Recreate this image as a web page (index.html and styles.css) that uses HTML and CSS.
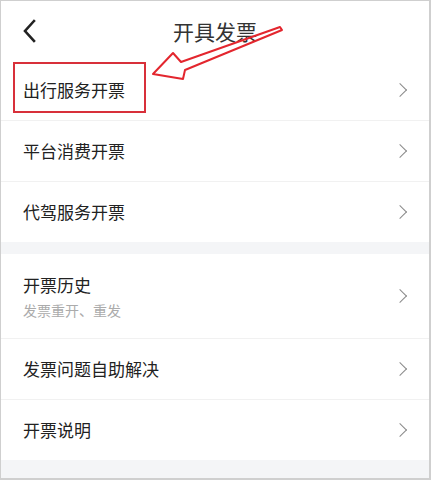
FILE: index.html
```html
<!DOCTYPE html>
<html lang="zh-CN">
<head>
<meta charset="utf-8">
<title>开具发票</title>
<link rel="stylesheet" href="styles.css">
</head>
<body>
<div class="screen">
  <header class="header">
    <span class="back">
      <svg width="14" height="24" viewBox="0 0 14 24"><path d="M12 2 L3 12 L12 22" fill="none" stroke="#222" stroke-width="2.6" stroke-linecap="square" stroke-linejoin="miter"/></svg>
    </span>
    <h1 class="title">开具发票</h1>
    <span></span>
  </header>
  <ul class="group">
    <li class="row"><span class="label">出行服务开票</span><span class="chev"></span></li>
    <li class="row"><span class="label">平台消费开票</span><span class="chev"></span></li>
    <li class="row"><span class="label">代驾服务开票</span><span class="chev"></span></li>
  </ul>
  <div class="gap"></div>
  <ul class="group">
    <li class="row row-tall"><span class="text"><span class="label">开票历史</span><span class="sub">发票重开、重发</span></span><span class="chev"></span></li>
    <li class="row"><span class="label">发票问题自助解决</span><span class="chev"></span></li>
    <li class="row"><span class="label">开票说明</span><span class="chev"></span></li>
  </ul>
  <div class="foot"></div>

  <div class="highlight"></div>
  <svg class="arrow" width="431" height="120" viewBox="0 0 431 120">
    <polygon points="280,27 181,62 173,53 153,74 183,79 185,70 282,30" fill="none" stroke="#e3262e" stroke-width="2" stroke-linejoin="round"/>
  </svg>
</div>
</body>
</html>
```
FILE: styles.css
```css
* { box-sizing: border-box; }
html, body { margin: 0; padding: 0; background: #fff; }
body {
  font-family: "Noto Sans CJK SC", "Noto Sans", sans-serif;
  color: #222;
}
.screen {
  position: relative;
  width: 431px;
  height: 480px;
  border: 1px solid #cfcfcf;
  border-right-width: 2px;
  border-bottom-width: 2px;
  overflow: hidden;
  display: flex;
  flex-direction: column;
  background: #fff;
}
.header {
  height: 59px;
  display: grid;
  grid-template-columns: 1fr auto 1fr;
  align-items: center;
  padding: 6px 21px 0 21px;
}
.back { display: flex; align-items: center; margin-top: -6px; }
.title {
  margin: 0 0 6px 0;
  font-size: 21px;
  font-weight: 400;
  line-height: 28px;
  color: #333;
}
.group {
  list-style: none;
  margin: 0;
  padding: 0;
}
.row {
  height: 61px;
  display: flex;
  align-items: center;
  justify-content: space-between;
  padding: 0 22px 0 22px;
  border-bottom: 1px solid #f1f1f1;
}
.row:last-child { border-bottom: none; height: 60px; }
.row-tall { height: 85px; }
.label {
  font-size: 17px;
  line-height: 24px;
  color: #222;
}
.text { display: flex; flex-direction: column; gap: 3px; }
.sub {
  font-size: 14px;
  line-height: 20px;
  color: #ababab;
}
.chev {
  width: 10px;
  height: 10px;
  border-top: 1.6px solid #8a8a8a;
  border-right: 1.6px solid #8a8a8a;
  transform: rotate(45deg);
  margin-right: 2px;
}
.gap {
  height: 12px;
  background: #f4f5f7;
}
.foot {
  flex: 1;
  background: #f4f5f7;
}
.highlight {
  position: absolute;
  left: 12px;
  top: 61px;
  width: 133px;
  height: 51px;
  border: 2px solid #d8303a;
}
.arrow {
  position: absolute;
  left: -1px;
  top: -1px;
}
```
